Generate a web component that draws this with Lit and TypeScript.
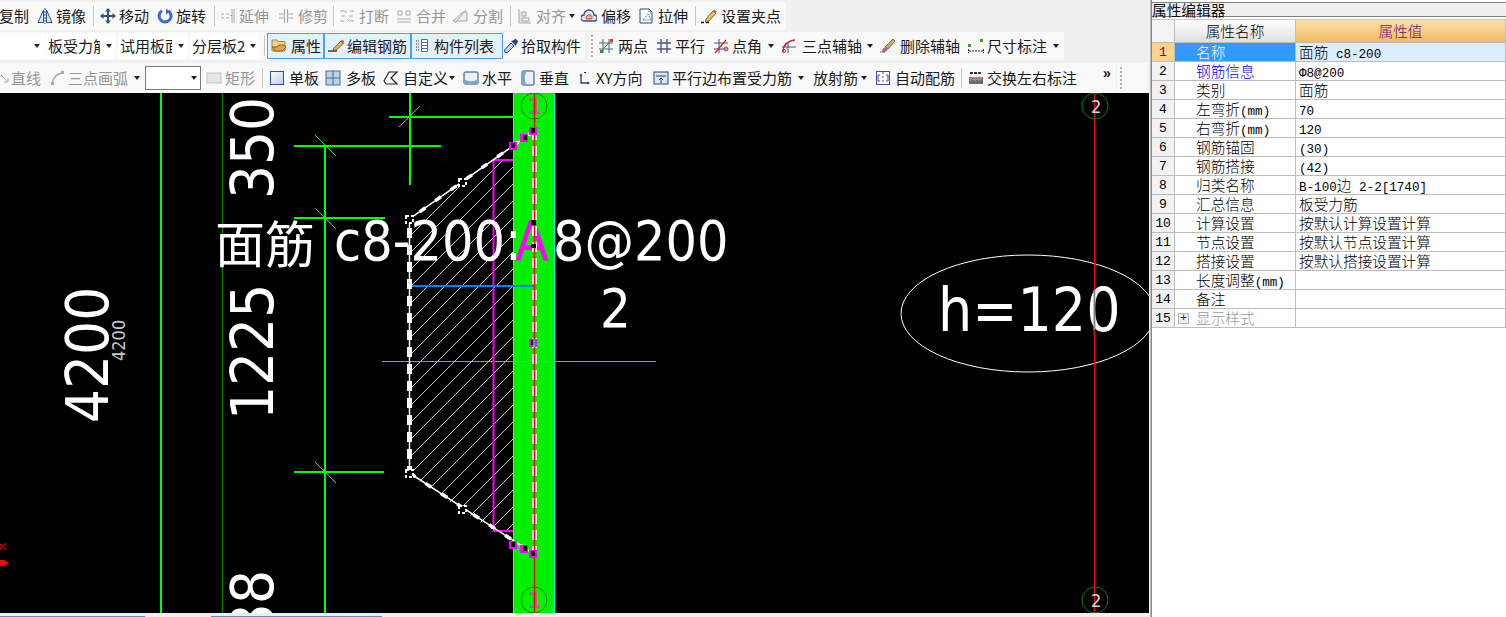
import { LitElement, html, css, svg, nothing } from "lit";
import { customElement } from "lit/decorators.js";

type Item = {
  x: number;
  tx?: number;
  t?: string;
  i?: string;
  dis?: boolean;
  kind?: "sep" | "arrow" | "field" | "box" | "grip" | "active" | "more";
  w?: number;
  tw?: number;
  ax?: number;
};

const B = "#2a4f8f";
const G = "#a9a9a9";
const icons: Record<string, unknown> = {
  mirror: svg`<path d="M1 14.500 6.500 2v12.500zM15 14.500 9.500 2v12.500z" fill="#dbe6f6" stroke="${B}"/><path d="M8 0v16" stroke="${B}" stroke-dasharray="2 1"/>`,
  move: svg`<path d="M8 0 5 3.500H7V7H3.500V5L0 8l3.500 3V9H7v3.500H5L8 16l3-3.500H9V9h3.500v2L16 8l-3.500-3v2H9V3.500h2z" fill="#33517f"/>`,
  rotate: svg`<path d="M5 2.800A6 6 0 1 0 11.500 3" fill="none" stroke="#3b6ec6" stroke-width="3"/><path d="M9 .5v6l4-3z" fill="#3b6ec6"/>`,
  extend: svg`<path d="M1 6h3M6 6h3M1 10h3M6 10h3M10 7.500h2M12 1v14M14 1v14" stroke="${G}" fill="none"/>`,
  trim: svg`<path d="M1 6h5M1 10h5M10 6h5M10 10h5M6.500 1v14M9.500 1v14" stroke="${G}" fill="none"/>`,
  breakI: svg`<path d="M1 3h5l2 2M15 3h-4M1 13h4M15 13h-5l-2-2M2 8h4M10 8h4" stroke="${G}" fill="none"/>`,
  merge: svg`<path d="M2 3h4v4H2zM10 3h4v4h-4zM1 11h14M1 14h14" stroke="${G}" fill="none"/>`,
  split: svg`<path d="M1 13 11 4h4v9zM3 15 14 2" stroke="${G}" fill="#eee"/>`,
  align: svg`<path d="M2 1v14h12M5 4h4v4H5zM5 10h7v3H5z" stroke="${G}" fill="#e8e8e8"/>`,
  offset: svg`<path d="M3 13a3 3 0 0 1 0-6 5 5 0 0 1 10 0 3 3 0 0 1 0 6z" fill="#dfe8f5" stroke="#35517f" stroke-width="1.300"/><path d="M5.500 11a2 2 0 0 1 .5-3 2.500 2.500 0 0 1 4.500 0 2 2 0 0 1 0 3z" fill="#f2b0a0" stroke="#c8402a"/>`,
  stretch: svg`<path d="M2 1h9l3 3v11H2z" fill="#fff" stroke="#27497f"/><path d="M11 1v3h3M5 12l5-6 3 6z" fill="none" stroke="#27497f" stroke-dasharray="1 1"/>`,
  grip: svg`<path d="M0 14.500h3M5 14.500h3" stroke="#111" stroke-width="1.400"/><path d="m5 11 7-8 3 2-7 8-3.500 1z" fill="#eac06a" stroke="#7a5a20"/><path d="m12 3 1.500-1.500 2 2L15 5" fill="#d05a5a"/>`,
  prop: svg`<path d="M1 2h5l1 1.500h7V13H1z" fill="#f1d28a" stroke="#a7813b"/><path d="M1 9h5l2-2h5l2 2-4 4H4z" fill="#e9a540" stroke="#8a5a18"/>`,
  edit: svg`<path d="M0 13h9" stroke="#222" stroke-width="1.300"/><path d="m6 10 7-7 2.500 2-7 7-3.500 1z" fill="#e3b566" stroke="#7a5a20"/><path d="m13 3 1.200-1.500 1.800 2L15.500 5z" fill="#c84a4a"/>`,
  list: svg`<path d="M1 3h3M1 6h3M1 9h3M1 12h3" stroke="#666" stroke-width="1.400" stroke-dasharray="1 1"/><path d="M6.500 1.500h6v12h-6zM6.500 4.500h6M6.500 7.500h6M6.500 10.500h6" fill="#fff" stroke="#5a6d88"/>`,
  pick: svg`<path d="M2 14.500 1.500 12 8 5l3 3-6.500 6.500z" fill="#bcd6f4" stroke="#27497f"/><path d="m8 3 5 5 1-3 1.500-1.500-3-3L11 2z" fill="#27497f"/>`,
  two: svg`<path d="M1 5h14M1 11h14M5 1v14M11 1v14" stroke="#51608a" fill="none"/><path d="m2 14 12-12" stroke="#3f9a3f"/><rect x="2" y="12" width="3" height="3" fill="#3c8c2e"/><rect x="12" y="1" width="3" height="3" fill="#c84a2a"/>`,
  par: svg`<path d="M1 5h14M1 11h14M5 1v14M11 1v14" stroke="#474f8a" stroke-width="1.300" fill="none"/>`,
  angle: svg`<path d="M1 5h14M1 11h14M6 1v14" stroke="#474f8a" fill="none"/><path d="m2 15 11-13" stroke="#c82a2a" stroke-width="1.300"/><circle cx="13" cy="11" r="2" fill="none" stroke="#c82a2a"/>`,
  three: svg`<path d="M2 14C2 7 7 3 14 2" stroke="#d02a2a" stroke-width="1.400" fill="none"/><path d="M1 9h14M7 4v11" stroke="#474f8a" fill="none"/><circle cx="3" cy="13" r="1.500" fill="none" stroke="#d02a2a"/>`,
  del: svg`<path d="M0 14h5" stroke="#777"/><path d="m5 9 8-8 2 2-7 8z" fill="#c9a86a" stroke="#7a6a4a"/><path d="M2 14.500c0-3 1.500-5 3.500-5.500l2.500 2c-1 2-3 3.500-6 3.500z" fill="#b7568a"/>`,
  dim: svg`<rect x="0" y="6" width="3" height="3" fill="#3aa03a"/><rect x="12" y="1" width="3" height="3" fill="#3aa03a"/><path d="M.5 11v4M15.500 11v4M1 13h14" stroke="#222" fill="none" stroke-dasharray="2 1"/>`,
  lineI: svg`<path d="M1 5l6 6M4 12h4V8" stroke="${G}" fill="none"/>`,
  arc: svg`<path d="M2 14C3 8 6 4 12 3" stroke="${G}" stroke-width="1.500" fill="none"/><rect x="1" y="12" width="3" height="3" fill="${G}"/><rect x="11" y="1" width="3" height="3" fill="${G}"/>`,
  rect: svg`<rect x="1" y="3" width="14" height="10" fill="#e6e6e6" stroke="#c4c4c4"/>`,
  single: svg`<defs><linearGradient id="sg" x1="0" y1="0" x2="1" y2="1"><stop offset="0" stop-color="#fff"/><stop offset="1" stop-color="#b8cdea"/></linearGradient></defs><rect x="1.500" y="1.500" width="13" height="13" fill="url(#sg)" stroke="#2a52a0"/>`,
  multi: svg`<rect x="1" y="1" width="14" height="14" fill="#b8d0ea" stroke="#4c6f9c"/><path d="M8 1v14M1 8h14" stroke="#4c6f9c"/>`,
  custom: svg`<path d="M1 11 6 2h8l-6 6 6 6H3z" fill="none" stroke="#222" stroke-width="1.200"/>`,
  hor: svg`<rect x="1" y="2" width="14" height="12" rx="1" fill="#eaf1fa" stroke="#27497f"/><path d="M1 9c4 3 10 3 14 0v5H1z" fill="#7fa3d0"/>`,
  ver: svg`<rect x="2" y="1" width="12" height="14" rx="1" fill="#eaf1fa" stroke="#27497f"/><path d="M7 1C4 5 4 11 7 15H2V1z" fill="#7fa3d0"/>`,
  xy: svg`<path d="M4 5v8h8" stroke="#27497f" stroke-width="1.400" fill="none"/><path d="m2.500 6 1.500-3 1.500 3zM10 11.500l3 1.500-3 1.500z" fill="#27497f"/><path d="m7 2 1 1M9 2 8 3" stroke="#222"/>`,
  para: svg`<rect x="1" y="2" width="14" height="12" fill="#dbe6f6" stroke="#27497f"/><path d="M3 6h10M8 13V8M6 10l2-2 2 2" stroke="#27497f" fill="none"/>`,
  auto: svg`<rect x="1.500" y="1.500" width="13" height="13" fill="#fff" stroke="#3f4fa8"/><path d="M8 1v3M8 6v2M8 10v2M5 5H3v6h2M11 5h2v6h-2" stroke="#3f4fa8" fill="none"/>`,
  swap: svg`<rect x="1" y="7" width="14" height="7" fill="#6a6a6a"/><path d="M3 7v4M5 7v3M7 7v4M9 7v3M11 7v4M13 7v3" stroke="#e8a090"/><path d="M2 3h12" stroke="#333" stroke-width="2" stroke-dasharray="3 1"/>`,
};

const row1: Item[] = [
  { x: -1, tx: -1, t: "复制" },
  { x: 37, tx: 56, t: "镜像", i: "mirror" },
  { x: 93, kind: "sep" },
  { x: 100, tx: 119, t: "移动", i: "move" },
  { x: 157, tx: 176, t: "旋转", i: "rotate" },
  { x: 214, kind: "sep" },
  { x: 220, tx: 239, t: "延伸", i: "extend", dis: true },
  { x: 278, tx: 298, t: "修剪", i: "trim", dis: true },
  { x: 333, kind: "sep" },
  { x: 339, tx: 359, t: "打断", i: "breakI", dis: true },
  { x: 396, tx: 416, t: "合并", i: "merge", dis: true },
  { x: 452, tx: 473, t: "分割", i: "split", dis: true },
  { x: 510, kind: "sep" },
  { x: 517, tx: 536, t: "对齐", i: "align", dis: true },
  { x: 569, kind: "arrow" },
  { x: 581, tx: 601, t: "偏移", i: "offset" },
  { x: 638, tx: 658, t: "拉伸", i: "stretch" },
  { x: 695, kind: "sep" },
  { x: 701, tx: 721, t: "设置夹点", i: "grip" },
];
const row2a: Item[] = [
  { x: 0, kind: "field", w: 45, tw: 33, ax: 34, t: "" },
  { x: 46, kind: "field", w: 69, tw: 52, ax: 60, t: "板受力筋" },
  { x: 118, kind: "field", w: 69, tw: 52, ax: 60, t: "试用板面" },
  { x: 190, kind: "field", w: 69, tw: 53, ax: 60, t: "分层板2层" },
  { x: 264, kind: "sep" },
  { x: 267, tx: 291, t: "属性", i: "prop", kind: "active" },
  { x: 324, tx: 347, t: "编辑钢筋", i: "edit", kind: "active" },
  { x: 411, tx: 434, t: "构件列表", i: "list", kind: "active" },
  { x: 503, tx: 521, t: "拾取构件", i: "pick" },
];
const row2b: Item[] = [
  { x: 591, kind: "grip" },
  { x: 598, tx: 618, t: "两点", i: "two" },
  { x: 656, tx: 675, t: "平行", i: "par" },
  { x: 713, tx: 732, t: "点角", i: "angle" },
  { x: 768, kind: "arrow" },
  { x: 781, tx: 802, t: "三点辅轴", i: "three" },
  { x: 867, kind: "arrow" },
  { x: 880, tx: 900, t: "删除辅轴", i: "del" },
  { x: 968, tx: 987, t: "尺寸标注", i: "dim" },
  { x: 1053, kind: "arrow" },
];
const row3a: Item[] = [
  { x: 0, tx: 11, t: "直线", i: "lineI", dis: true },
  { x: 50, tx: 68, t: "三点画弧", i: "arc", dis: true },
  { x: 134, kind: "arrow" },
  { x: 145, kind: "box", w: 56 },
  { x: 206, tx: 225, t: "矩形", i: "rect", dis: true },
  { x: 262, kind: "sep" },
  { x: 269, tx: 289, t: "单板", i: "single" },
  { x: 325, tx: 346, t: "多板", i: "multi" },
  { x: 383, tx: 403, t: "自定义", i: "custom" },
  { x: 449, kind: "arrow" },
  { x: 463, tx: 482, t: "水平", i: "hor" },
  { x: 520, tx: 539, t: "垂直", i: "ver" },
  { x: 577, tx: 596, t: "XY方向", i: "xy" },
  { x: 653, tx: 672, t: "平行边布置受力筋", i: "para" },
  { x: 798, kind: "arrow" },
  { x: 813, tx: 813, t: "放射筋" },
  { x: 861, kind: "arrow" },
  { x: 875, tx: 895, t: "自动配筋", i: "auto" },
  { x: 961, kind: "sep" },
  { x: 968, tx: 987, t: "交换左右标注", i: "swap" },
  { x: 1103, kind: "more" },
];

const rows: [string, string, string?][] = [
  ["名称", "面筋 c8-200", "sel"],
  ["钢筋信息", "Φ8@200", "link"],
  ["类别", "面筋"],
  ["左弯折(mm)", "70"],
  ["右弯折(mm)", "120"],
  ["钢筋锚固", "(30)"],
  ["钢筋搭接", "(42)"],
  ["归类名称", "B-100边 2-2[1740]"],
  ["汇总信息", "板受力筋"],
  ["计算设置", "按默认计算设置计算"],
  ["节点设置", "按默认节点设置计算"],
  ["搭接设置", "按默认搭接设置计算"],
  ["长度调整(mm)", ""],
  ["备注", ""],
  ["显示样式", "", "dim"],
];

const mixed = (s: string) =>
  html`<span class="cell">${s
    .split(/([\x00-\x7f\u03a6]+)/)
    .map((p, i) => (i % 2 ? html`<span class="lat">${p}</span>` : p))}</span>`;

const hatch = () => {
  const out = [];
  for (let c = 612; c < 1060; c += 17) {
    out.push(svg`<line x1=${c - 620} y1="620" x2="620" y2=${c - 620} class="hatch"/>`);
  }
  return out;
};

const dims = [
  { t: "350", x: 273, y: 199, c: "dim" },
  { t: "1225", x: 273, y: 420, c: "dim" },
  { t: "4200", x: 108, y: 423, c: "dim" },
  { t: "4200", x: 125, y: 361, c: "dimS" },
  { t: "88", x: 273, y: 638, c: "dim" },
];

const whites: [number, number][] = [
  [409, 219],
  [462, 182],
  [409, 473],
  [462, 509],
];
const mags: [number, number, number][] = [
  [513, 146, 0],
  [524, 138, 1],
  [533, 131, 0],
  [513, 545, 0],
  [524, 549, 1],
  [533, 554, 0],
  [533, 343, 0],
];

@customElement("app-root")
export class AppRoot extends LitElement {
  static styles = css`
    :host {
      display: block;
      width: 1506px;
      height: 617px;
      overflow: hidden;
      background: #f0f0f0;
      font-family: "Noto Sans CJK SC", "Liberation Sans", sans-serif;
      color: #1a1a1a;
    }
    .app { display: flex; width: 1506px; height: 617px; }
    .left { width: 1149px; flex: none; display: flex; flex-direction: column; }
    .tools { height: 93px; flex: none; padding-top: 2px; box-sizing: border-box; display: flex; flex-direction: column; }
    .row { display: flex; }
    .r1 { height: 28px; margin-bottom: 2px; }
    .r2 { height: 28px; margin-bottom: 3px; }
    .r3 { height: 30px; }
    .band { display: flex; align-items: center; background: #f9f9f9; overflow: hidden; flex: none; }
    .gap3 { width: 3px; flex: none; }
    .gap1 { width: 1px; flex: none; }
    .item { display: flex; align-items: center; flex: none; height: 100%; font-size: 15px; line-height: 20px; white-space: nowrap; position: relative; }
    .slot { flex: none; display: flex; align-items: center; }
    .ic { width: 16px; height: 16px; display: block; flex: none; }
    .dis { color: #969696; }
    .sep::before { content: ""; display: block; width: 1px; height: 20px; background: #c4c4c4; }
    .arr::before { content: ""; display: block; width: 0; height: 0; border: 3.5px solid transparent; border-top: 4px solid #222; border-bottom: 0; }
    .fieldwrap { display: flex; align-items: center; height: 26px; background: #fff; overflow: hidden; }
    .ftext { overflow: hidden; flex: none; padding-left: 2px; box-sizing: border-box; }
    .farrow { flex: none; }
    .boxc { height: 24px; box-sizing: border-box; border: 1px solid #7a7a7a; background: #fff; display: flex; align-items: center; justify-content: flex-end; padding-right: 3px; }
    .active { box-sizing: border-box; height: 26px; border: 1px solid #4da0ea; background: #e4f0fb; padding-left: 3px; }
    .more { font: bold 14px "Liberation Sans", sans-serif; align-items: flex-start; padding-top: 4px; }
    .gripc { width: 2px; height: 22px; background-image: repeating-linear-gradient(#b0b0b0 0 2px, transparent 2px 4px); }
    svg.cad { display: block; width: 1149px; height: 520px; background: #000; flex: none; }
    .foot { height: 4px; flex: none; background: #f0f0f0; display: flex; align-items: flex-end; }
    .foot i { display: block; height: 1px; flex: none; background: #3399ff; }
    .fb1 { width: 145px; }
    .fb2 { width: 66px; flex: none; }
    .fb3 { width: 171px; }
    .divider { flex: none; width: 1px; margin-left: 1px; background: #b9b9c2; }
    .panel { flex: 1; background: #fff; border-left: 1px solid #8a8a8a; font-size: 14.67px; line-height: 18px; min-width: 0; }
    .title { height: 13px; margin-top: 2px; margin-bottom: 2px; border-top: 1px solid #808080; border-bottom: 1px solid #808080; background: #f0f0f0; line-height: 14px; font-size: 14.67px; color: #111; white-space: nowrap; }
    .grid { display: grid; grid-template-columns: 23px 121px 1fr; grid-template-rows: 23px; grid-auto-rows: 19px; border-top: 1px solid #c8c8c8; }
    .grid > div { border-bottom: 1px solid #bdbdbd; border-right: 1px solid #bdbdbd; box-sizing: border-box; display: flex; align-items: center; white-space: nowrap; color: #000; font-weight: 300; }
    .cell { white-space: pre; }
    .grid > .h0 { background: #f4f4f4; }
    .grid > .h1 { background: linear-gradient(#fff, #dfdfdf); justify-content: center; }
    .grid > .h2 { background: linear-gradient(#fbe0ab, #f0bc60); justify-content: center; color: #6f0f6f; }
    .grid > .no { background: #f2f2f2; justify-content: center; font: 13px "Liberation Mono", monospace; }
    .grid > .no.on { background: #fdd28d; color: #6f0f3f; }
    .grid > .nm { padding-left: 21px; }
    .grid > .nm.sel { background: #3399ff; color: #fff; }
    .grid > .nm.link { color: #0000ff; }
    .grid > .nm.dim { color: #9a9a9a; padding-left: 3px; }
    .grid > .val { padding-left: 3px; }
    .grid > .val.sel { background: #dfeeff; }
    .lat { font: 12.6px "Liberation Mono", monospace; }
    .plus { width: 11px; height: 11px; box-sizing: border-box; border: 1px solid #b5b5b5; background: #eee; color: #222; font: 11px/9px "Liberation Mono", monospace; text-align: center; margin-right: 7px; flex: none; }
    .cad text { font-family: "DejaVu Sans Condensed", "DejaVu Sans", sans-serif; fill: #fff; }
    .cad .big { font-size: 55px; }
    .cad .two { font-size: 54px; }
    .cad .cjk { font-family: "Noto Sans CJK SC", sans-serif; font-size: 50px; font-weight: 400; }
    .cad .dim { font-size: 59.5px; }
    .cad .dimS { font-size: 18px; fill: #c8c8c8; }
    .cad .mag { fill: #ff00ff; }
    .cad .hn { font-size: 60px; }
    .cad .axn { font-size: 18px; fill: #d8d8d8; }
    .cad .axp { font-size: 22px; fill: #c05aa0; font-weight: bold; }
    .hatch { stroke: #cfcfcf; stroke-width: 1; }
    .g2 { stroke: #00ff00; stroke-width: 2; }
    .g1 { stroke: #00ff00; stroke-width: 1; }
    .gd { stroke: #008a00; stroke-width: 1; }
    .gt { stroke: #38d838; stroke-width: 1; }
    .red { stroke: #ff0000; stroke-width: 1.5; fill: none; }
    .ring { stroke: #008000; fill: none; stroke-width: 1; }
    .mg { stroke: #ff00ff; stroke-width: 2; fill: none; }
    .wh { stroke: #fff; stroke-width: 1.500; fill: none; }
    .whd { stroke: #fff; stroke-width: 5; fill: none; stroke-dasharray: 10 7; }
    .whs { stroke: #fff; stroke-width: 3.500; fill: none; stroke-dasharray: 7 12; }
    .vd { stroke: #fff; stroke-width: 5; stroke-dasharray: 10 6; }
    .n1 { fill: #000; stroke: #fff; stroke-width: 2; stroke-dasharray: 3 2; }
    .nm1 { fill: #ff00ff; }
    .nk { fill: #000; }
    .ell { stroke: #fff; fill: none; stroke-width: 1; }
  `;

  private band(items: Item[], x0: number, x1: number) {
    return html`<div class="band" style="width:${x1 - x0}px">
      ${items.map((it, k) => {
        const next = k + 1 < items.length ? items[k + 1].x : x1;
        const ml = k === 0 ? it.x - x0 : 0;
        const st = `width:${next - it.x}px;margin-left:${ml}px`;
        if (it.kind === "sep") return html`<div class="item sep" style=${st}></div>`;
        if (it.kind === "arrow") return html`<div class="item arr" style=${st}></div>`;
        if (it.kind === "grip") return html`<div class="item" style=${st}><div class="gripc"></div></div>`;
        if (it.kind === "more") return html`<div class="item more" style=${st}>»</div>`;
        if (it.kind === "box")
          return html`<div class="item" style=${st}><div class="boxc arr" style="width:${it.w}px"></div></div>`;
        if (it.kind === "field")
          return html`<div class="item" style=${st}>
            <div class="fieldwrap" style="width:${it.w}px">
              <span class="ftext" style="width:${(it.tw ?? 0) + 2}px">${it.t}</span>
              <span class="farrow arr" style="margin-left:${(it.ax ?? 0) - (it.tw ?? 0) - 2}px"></span>
            </div>
          </div>`;
        const extra = it.kind === "active" ? 4 : 0;
        return html`<div class="item ${it.dis ? "dis" : ""} ${it.kind === "active" ? "active" : ""}" style=${st}>
          <span class="slot" style="width:${(it.tx ?? it.x) - it.x - extra}px">
            ${it.i ? html`<svg class="ic" viewBox="0 0 16 16">${icons[it.i]}</svg>` : nothing}
          </span>
          <span>${it.t}</span>
        </div>`;
      })}
    </div>`;
  }

  private cad() {
    return svg`<svg class="cad" viewBox="0 93 1149 520">
      <defs><clipPath id="hc"><path d="M410 218 493 160H513V531H493L410 475z"/></clipPath></defs>
      <rect x="514" y="93" width="40" height="520" fill="#00f000"/>
      <rect x="513" y="93" width="1" height="520" fill="#00ffff"/>
      <rect x="554" y="93" width="1" height="520" fill="#00ffff"/>
      <line class="g2" x1="161" y1="93" x2="161" y2="613"/>
      <line class="gd" x1="222.500" y1="93" x2="222.500" y2="613"/>
      <line class="g2" x1="325" y1="146" x2="325" y2="613"/>
      <line class="g2" x1="294" y1="146" x2="441" y2="146"/>
      <line class="g2" x1="294" y1="218" x2="385" y2="218"/>
      <line class="g2" x1="294" y1="472" x2="384" y2="472"/>
      <line class="g2" x1="410" y1="93" x2="410" y2="185"/>
      <line class="g2" x1="389" y1="117" x2="553" y2="117"/>
      <line class="g1" x1="315" y1="135" x2="336" y2="156"/>
      <line class="g1" x1="315" y1="208" x2="336" y2="229"/>
      <line class="g1" x1="315" y1="462" x2="336" y2="483"/>
      <line class="g1" x1="420" y1="106" x2="399" y2="127"/>
      <line class="gt" x1="382" y1="361.500" x2="656" y2="361.500"/>
      <g clip-path="url(#hc)">${hatch()}</g>
      <path class="mg" d="M513 160H493.500V531H513"/>
      <line x1="410" y1="286" x2="534" y2="286" stroke="#0080ff" stroke-width="2"/>
      ${[106, 600].map(
        (y) => svg`<circle class="ring" cx="534" cy=${y} r="13"/>
        <text class="axp" x="528" y=${y + 8}>1</text>`
      )}
      <path class="wh" d="M534 131 409.500 219V473L534 554"/>
      <path class="whs" d="M534 131 409.500 219M409.500 473 534 554"/>
      <line class="whd" x1="409.500" y1="228" x2="409.500" y2="470"/>
      <text class="cjk" x="215" y="263">面筋</text>
      <text class="big" x="334" y="260">c8-200:</text>
      <text class="big mag" x="515" y="260">A</text>
      <text class="big" x="553" y="260">8@200</text>
      <line class="vd" x1="534.500" y1="130" x2="534.500" y2="554"/>
      <line class="red" x1="534.500" y1="93" x2="534.500" y2="613"/>
      <rect class="nk" x="531" y="220" width="5" height="5"/>
      <rect class="nk" x="531" y="244" width="5" height="4"/>
      ${whites.map(([x, y]) => svg`<rect class="n1" x=${x - 3} y=${y - 3} width="7" height="7"/>`)}
      ${mags.map(
        ([x, y, m]) => svg`<rect class="nm1" x=${x - 4} y=${y - 4} width="8" height="8"/>
        <rect class="nk" x=${x - (m ? 1 : 2)} y=${y - 3} width="4" height="5"/>`
      )}
      <line x1="534" y1="340" x2="534" y2="347" stroke="#00ffff" stroke-width="1.500"/>
      <text class="two" x="600" y="327">2</text>
      ${dims.map(
        (d) => svg`<text class=${d.c} transform="translate(${d.x} ${d.y}) rotate(-90)">${d.t}</text>`
      )}
      <ellipse class="ell" cx="1028" cy="313.500" rx="127" ry="58.500"/>
      <text class="hn" x="938" y="331">h=120</text>
      <line class="red" x1="1094.500" y1="93" x2="1094.500" y2="613"/>
      <line x1="1094" y1="290" x2="1094" y2="330" stroke="#00ffff"/>
      ${[106, 600].map(
        (y) => svg`<circle class="ring" cx="1095" cy=${y} r="13"/>
        <text class="axn" x="1091" y=${y + 7}>2</text>`
      )}
      <path d="M-1 543l7 7M6 543l-7 7" stroke="#ff0000" fill="none"/>
      <path d="M0 560h4l5 3-5 3H0z" fill="#ff0000"/>
    </svg>`;
  }

  render() {
    return html`<div class="app">
      <div class="left">
        <div class="tools">
          <div class="row r1">${this.band(row1, 0, 786)}</div>
          <div class="row r2">
            ${this.band(row2a, 0, 585)}
            <div class="gap3"></div>
            ${this.band(row2b, 588, 1064)}
          </div>
          <div class="row r3">
            ${this.band(row3a, 0, 1116)}
            <div class="gap1"></div>
            ${this.band([{ x: 1120, kind: "grip" }], 1117, 1148)}
          </div>
        </div>
        ${this.cad()}
        <div class="foot"><i class="fb1"></i><span class="fb2"></span><i class="fb3"></i></div>
      </div>
      <div class="divider"></div>
      <div class="panel">
        <div class="title">属性编辑器</div>
        <div class="grid">
          <div class="h0"></div>
          <div class="h1">属性名称</div>
          <div class="h2">属性值</div>
          ${rows.map(
            ([n, v, f], i) => html`
              <div class="no ${i === 0 ? "on" : ""}">${i + 1}</div>
              <div class="nm ${f ?? ""}">
                ${f === "dim" ? html`<span class="plus">+</span>` : nothing}${mixed(n)}
              </div>
              <div class="val ${f === "sel" ? "sel" : ""}">${mixed(v)}</div>
            `
          )}
        </div>
      </div>
    </div>`;
  }
}
